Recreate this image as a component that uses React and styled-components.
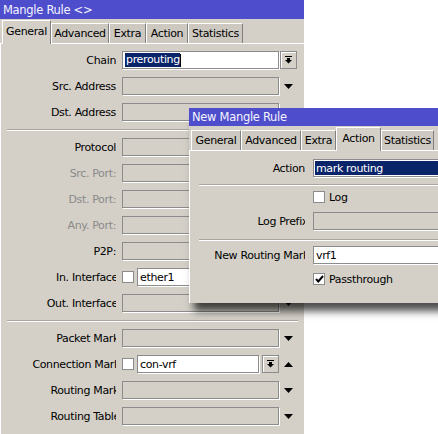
import React from 'react';
import styled, { createGlobalStyle } from 'styled-components';

const Global = createGlobalStyle`
  html, body { margin: 0; padding: 0; background: #fff; overflow: hidden; }
  body {
    font-family: "DejaVu Sans", Verdana, sans-serif;
    font-size: 11px;
    letter-spacing: -0.35px;
    color: #000;
  }
`;

const Desktop = styled.div`
  position: relative;
  width: 438px;
  height: 434px;
  overflow: hidden;
  background: #fff;
`;

const Window = styled.div`
  background: #d4d0c8;
  display: flex;
  flex-direction: column;
  width: ${p => p.$w}px;
  height: ${p => p.$h}px;
`;

const FloatingWindow = styled(Window)`
  position: absolute;
  left: 189px;
  top: 108px;
  box-shadow: 3px 10px 8px -2px rgba(0, 0, 0, 0.7);
`;

const TitleBar = styled.div`
  height: ${p => p.$h}px;
  flex-shrink: 0;
  background: #4e4ecc;
  color: #f4f4ff;
  display: flex;
  align-items: center;
  padding-left: 3px;
  font-size: 11.5px;
  letter-spacing: -0.3px;
`;

const TabStrip = styled.div`
  height: 24px;
  flex-shrink: 0;
  display: flex;
  align-items: flex-end;
  padding-left: 2px;
  position: relative;
  z-index: 1;
`;

const Tab = styled.div`
  box-sizing: border-box;
  width: ${p => p.$w}px;
  height: ${p => (p.$active ? 24 : 20)}px;
  margin-bottom: ${p => (p.$active ? -1 : 0)}px;
  background: ${p => (p.$active ? '#d4d0c8' : '#cdc9c1')};
  border-top: 1px solid #fff;
  border-left: 1px solid #fff;
  border-right: 1px solid #808080;
  display: flex;
  align-items: ${p => (p.$active ? 'flex-start' : 'center')};
  padding-top: ${p => (p.$active ? 4 : 0)}px;
  justify-content: center;
  white-space: nowrap;
  overflow: hidden;
`;

const Panel = styled.div`
  flex: 1;
  border-top: 1px solid #fff;
  border-left: 1px solid #fff;
  display: flex;
  flex-direction: column;
`;

const Row = styled.div`
  display: flex;
  align-items: center;
  height: ${p => p.$h || 18}px;
  margin-top: ${p => p.$mt}px;
  gap: ${p => p.$gap || 6}px;
  flex-shrink: 0;
`;

const LabelBox = styled.div`
  width: ${p => p.$w || 115}px;
  flex-shrink: 0;
  overflow: hidden;
  display: flex;
  justify-content: flex-end;
`;

const LabelText = styled.span`
  flex-shrink: 0;
  white-space: nowrap;
  margin-right: ${p => -(p.$cut || 0)}px;
  color: ${p => (p.$disabled ? '#8a8a8a' : '#000')};
`;

const Field = styled.div`
  width: ${p => (p.$w ? `${p.$w}px` : 'auto')};
  flex: ${p => (p.$w ? '0 0 auto' : '1')};
  display: flex;
  align-items: center;
  gap: 3px;
  height: 18px;
  margin-right: ${p => p.$mr || 0}px;
`;

const Input = styled.div`
  box-sizing: border-box;
  flex: 1;
  height: 18px;
  border: 1px solid #8c8c8c;
  box-shadow: 1px 1px 0 #fff;
  background: ${p => (p.$selected ? '#0a246a' : p.$enabled ? '#fff' : '#d4d0c8')};
  color: ${p => (p.$selected ? '#fff' : '#000')};
  outline: ${p => (p.$selected ? '1px solid #fff' : 'none')};
  outline-offset: -2px;
  display: flex;
  align-items: center;
  padding-left: 2px;
  white-space: nowrap;
  overflow: hidden;
`;

const Highlight = styled.span`
  background: #0a246a;
  color: #fff;
  line-height: 14px;
  padding-left: 1px;
`;

const Caret = styled.span`
  display: inline-block;
  width: 1px;
  height: 13px;
  background: #000;
`;

const Side = styled.div`
  width: 17px;
  height: 18px;
  flex-shrink: 0;
  margin-left: -5px;
  display: flex;
  align-items: center;
  justify-content: center;
`;

const DropButton = styled.div`
  box-sizing: border-box;
  width: 17px;
  height: 18px;
  flex-shrink: 0;
  border: 1px solid #8c8c8c;
  box-shadow: inset 1px 1px 0 #fff;
  background: #d4d0c8;
  display: flex;
  align-items: center;
  justify-content: center;
`;

const CheckBox = styled.div`
  box-sizing: border-box;
  width: 12px;
  height: 12px;
  flex-shrink: 0;
  background: #fff;
  border: 1px solid #8c8c8c;
  display: flex;
  align-items: center;
  justify-content: center;
`;

const CheckField = styled.div`
  display: flex;
  align-items: center;
  gap: 4px;
`;

const Separator = styled.div`
  height: 1px;
  border-bottom: 1px solid #fff;
  background: #aaa69e;
  margin: ${p => p.$mt}px ${p => p.$mr || 6}px 0 ${p => p.$ml || 6}px;
  flex-shrink: 0;
`;

const Spacer = styled.div`
  width: ${p => p.$w}px;
  flex-shrink: 0;
`;

const DropIcon = () => (
  <svg width="7" height="8" viewBox="0 0 7 8">
    <rect x="0" y="0" width="7" height="1" fill="#000" />
    <rect x="2" y="2" width="3" height="2" fill="#000" />
    <polygon points="0,4 7,4 3.5,7.5" fill="#000" />
  </svg>
);

const Arrow = ({ up }) => (
  <svg width="9" height="5" viewBox="0 0 9 5">
    {up ? <polygon points="0,5 9,5 4.5,0" fill="#000" /> : <polygon points="0,0 9,0 4.5,5" fill="#000" />}
  </svg>
);

const CheckMark = () => (
  <svg width="9" height="8" viewBox="0 0 9 8">
    <polyline points="1,4 3.3,6.5 8,1" fill="none" stroke="#000" strokeWidth="2" />
  </svg>
);

const Label = ({ text, cut, disabled, w }) => (
  <LabelBox $w={w}>
    <LabelText $cut={cut} $disabled={disabled}>{text}</LabelText>
  </LabelBox>
);

const mainTabs = [
  ['General', 49, true],
  ['Advanced', 58],
  ['Extra', 37],
  ['Action', 42],
  ['Statistics', 55],
];

const subTabs = [
  ['General', 50],
  ['Advanced', 60],
  ['Extra', 35],
  ['Action', 45, true],
  ['Statistics', 53],
];

const Tabs = ({ tabs }) => (
  <TabStrip>
    {tabs.map(([t, w, a]) => (
      <Tab key={t} $w={w} $active={a}>{t}</Tab>
    ))}
  </TabStrip>
);

const MainRow = ({ label, cut, disabled, mt, children, side }) => (
  <Row $mt={mt}>
    <Label text={label} cut={cut} disabled={disabled} />
    <Field $w={157}>{children}</Field>
    <Side>{side}</Side>
  </Row>
);

export default function App() {
  return (
    <Desktop>
      <Global />
      <Window $w={304} $h={434}>
        <TitleBar $h={19}>Mangle Rule &lt;&gt;</TitleBar>
        <Tabs tabs={mainTabs} />
        <Panel>
          <MainRow label="Chain" mt={7} side={<DropButton><DropIcon /></DropButton>}>
            <Input $enabled>
              <Highlight>prerouting</Highlight>
              <Caret />
            </Input>
          </MainRow>
          <MainRow label="Src. Address" mt={8} side={<Arrow />}>
            <Input />
          </MainRow>
          <MainRow label="Dst. Address" mt={8} side={<Arrow />}>
            <Input />
          </MainRow>
          <Separator $mt={8} $mr={6} />
          <MainRow label="Protocol" mt={7} side={<Arrow />}>
            <Input />
          </MainRow>
          <MainRow label="Src. Port:" disabled mt={8}>
            <Input />
          </MainRow>
          <MainRow label="Dst. Port:" disabled mt={8}>
            <Input />
          </MainRow>
          <MainRow label="Any. Port:" disabled mt={8}>
            <Input />
          </MainRow>
          <MainRow label="P2P:" mt={8} side={<Arrow />}>
            <Input />
          </MainRow>
          <MainRow label="In. Interface" cut={2} mt={8} side={<Arrow up />}>
            <CheckBox />
            <Input $enabled>ether1</Input>
          </MainRow>
          <MainRow label="Out. Interface" cut={2} mt={8} side={<Arrow />}>
            <Input />
          </MainRow>
          <Separator $mt={8} $mr={6} />
          <MainRow label="Packet Mark" cut={3} mt={7} side={<Arrow />}>
            <Input />
          </MainRow>
          <MainRow label="Connection Mark" cut={4} mt={8} side={<Arrow up />}>
            <CheckBox />
            <Input $enabled>con-vrf</Input>
            <DropButton><DropIcon /></DropButton>
          </MainRow>
          <MainRow label="Routing Mark" cut={3} mt={8} side={<Arrow />}>
            <Input />
          </MainRow>
          <MainRow label="Routing Table" cut={4} mt={8} side={<Arrow />}>
            <Input />
          </MainRow>
        </Panel>
      </Window>

      <FloatingWindow $w={262} $h={195}>
        <TitleBar $h={18}>New Mangle Rule</TitleBar>
        <Tabs tabs={subTabs} />
        <Panel>
          <Row $mt={8} $gap={8}>
            <Label text="Action" />
            <Field $mr={4}>
              <Input $selected>mark routing</Input>
            </Field>
          </Row>
          <Separator $mt={7} $ml={9} $mr={0} />
          <Row $mt={5} $h={12} $gap={8}>
            <Spacer $w={115} />
            <CheckField>
              <CheckBox />
              <span>Log</span>
            </CheckField>
          </Row>
          <Row $mt={9} $gap={8}>
            <Label text="Log Prefix" cut={3} />
            <Field $mr={4}>
              <Input />
            </Field>
          </Row>
          <Separator $mt={9} $ml={9} $mr={0} />
          <Row $mt={5} $gap={8}>
            <Label text="New Routing Mark" cut={4} />
            <Field $mr={4}>
              <Input $enabled>vrf1</Input>
            </Field>
          </Row>
          <Row $mt={9} $h={12} $gap={8}>
            <Spacer $w={115} />
            <CheckField>
              <CheckBox><CheckMark /></CheckBox>
              <span>Passthrough</span>
            </CheckField>
          </Row>
        </Panel>
      </FloatingWindow>
    </Desktop>
  );
}
